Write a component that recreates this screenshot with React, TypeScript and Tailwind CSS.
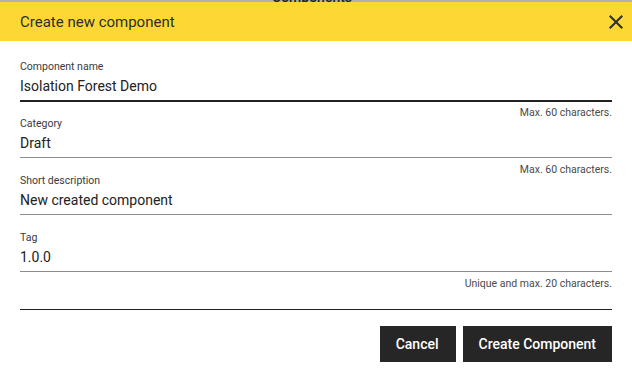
import React from "react";

function Field({
  label,
  value,
  helper,
  focused,
}: {
  label: string;
  value: string;
  helper?: string;
  focused?: boolean;
}) {
  return (
    <div>
      <div
        className={
          "border-b " +
          (focused
            ? "border-[#222222] shadow-[0_1px_0_#222222]"
            : "border-[#8c8c8c]")
        }
      >
        <div className="text-[10.5px] leading-[12px] text-[#3a3a3a]">{label}</div>
        <div className="mt-[3px] pb-[4px] text-[14px] leading-[20px] text-[#222222]">
          {value}
        </div>
      </div>
      <div className="h-[17px] pt-[6px] text-right text-[10.5px] leading-[11px] text-[#4a4a4a]">
        {helper ?? ""}
      </div>
    </div>
  );
}

export default function App() {
  return (
    <div
      className="w-[632px] h-[377px] bg-white overflow-hidden"
      style={{ fontFamily: "Roboto, 'Liberation Sans', sans-serif" }}
    >
      <div className="relative h-[2px] overflow-hidden bg-[#b0b0b0]">
        <span className="absolute left-[272px] top-[-11px] text-[14px] leading-[16px] font-medium text-[#222222] whitespace-nowrap">
          Components
        </span>
      </div>
      <div className="h-[39px] bg-[#fdd835] flex items-center justify-between pl-5 pr-[4px]">
        <span className="text-[15px] leading-[20px] text-[#2e2e2e]">Create new component</span>
        <svg width="24" height="24" viewBox="0 0 24 24" aria-hidden="true">
          <path
            fill="#2e2e2e"
            d="M19 6.41L17.59 5 12 10.59 6.41 5 5 6.41 10.59 12 5 17.59 6.41 19 12 13.41 17.59 19 19 17.59 13.41 12z"
          />
        </svg>
      </div>
      <div className="px-5 pt-[20px]">
        <Field label="Component name" value="Isolation Forest Demo" helper="Max. 60 characters." focused />
        <Field label="Category" value="Draft" helper="Max. 60 characters." />
        <Field label="Short description" value="New created component" />
        <Field label="Tag" value="1.0.0" helper="Unique and max. 20 characters." />
        <div className="h-[21px] border-b border-[#222222]" />
        <div className="mt-[16px] flex justify-end gap-[7px]">
          <button className="h-[36px] pl-[16px] pr-[17px] bg-[#262626] text-white text-[14px] font-medium">
            Cancel
          </button>
          <button className="h-[36px] px-[16px] bg-[#262626] text-white text-[14px] font-medium">
            Create Component
          </button>
        </div>
      </div>
    </div>
  );
}
